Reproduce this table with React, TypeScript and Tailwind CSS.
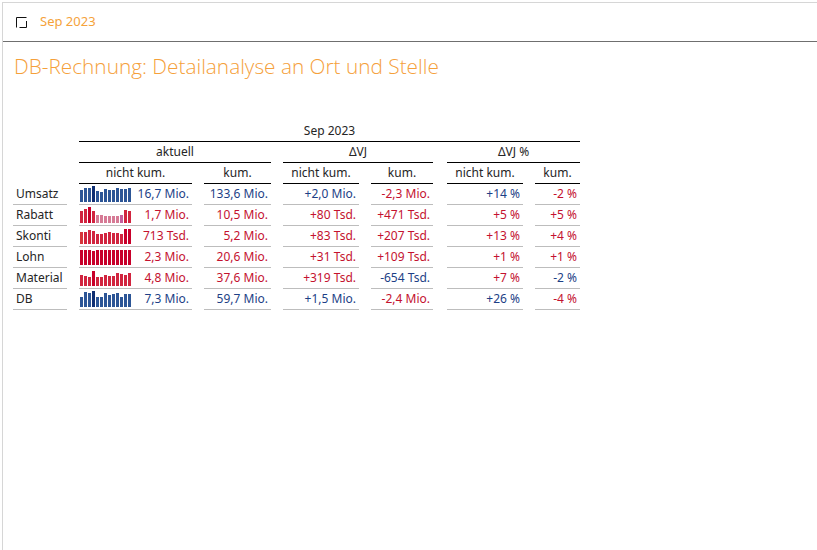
import React from "react";

const BLUE = "#1d3f86";
const RED = "#c4122f";

type Row = {
  label: string;
  bars: number[];
  colors: string[];
  values: [string, boolean][];
};

const b = "#2c5596";
const bd = "#0f2e72";
const r = "#d1243f";
const rd = "#c8002a";
const pk = "#d67a95";
const pu = "#c55e9c";

const rows: Row[] = [
  {
    label: "Umsatz",
    bars: [12, 14, 14, 16, 11, 10, 13, 12, 12, 14, 13, 13, 14],
    colors: [b, b, b, bd, b, b, b, b, b, b, b, b, b],
    values: [["16,7 Mio.", true], ["133,6 Mio.", true], ["+2,0 Mio.", true], ["-2,3 Mio.", false], ["+14 %", true], ["-2 %", false]],
  },
  {
    label: "Rabatt",
    bars: [12, 14, 16, 12, 8, 8, 7, 7, 7, 7, 8, 13, 12],
    colors: [r, r, rd, r, pk, pk, pk, pk, pk, pk, pu, r, r],
    values: [["1,7 Mio.", false], ["10,5 Mio.", false], ["+80 Tsd.", false], ["+471 Tsd.", false], ["+5 %", false], ["+5 %", false]],
  },
  {
    label: "Skonti",
    bars: [12, 12, 14, 13, 10, 10, 11, 12, 11, 11, 10, 15, 15],
    colors: ["#d6353a", r, r, r, r, r, r, r, r, r, r, rd, rd],
    values: [["713 Tsd.", false], ["5,2 Mio.", false], ["+83 Tsd.", false], ["+207 Tsd.", false], ["+13 %", false], ["+4 %", false]],
  },
  {
    label: "Lohn",
    bars: [15, 15, 15, 14, 15, 15, 15, 15, 15, 15, 15, 15, 15],
    colors: [rd, rd, rd, rd, rd, rd, rd, rd, rd, rd, rd, rd, rd],
    values: [["2,3 Mio.", false], ["20,6 Mio.", false], ["+31 Tsd.", false], ["+109 Tsd.", false], ["+1 %", false], ["+1 %", false]],
  },
  {
    label: "Material",
    bars: [11, 10, 9, 15, 9, 9, 11, 10, 10, 13, 12, 11, 13],
    colors: [r, r, r, rd, r, r, r, r, r, r, r, r, r],
    values: [["4,8 Mio.", false], ["37,6 Mio.", false], ["+319 Tsd.", false], ["-654 Tsd.", true], ["+7 %", false], ["-2 %", true]],
  },
  {
    label: "DB",
    bars: [10, 15, 14, 16, 10, 10, 14, 12, 13, 14, 10, 13, 13],
    colors: [b, b, b, bd, b, b, b, b, b, b, b, b, b],
    values: [["7,3 Mio.", true], ["59,7 Mio.", true], ["+1,5 Mio.", true], ["-2,4 Mio.", false], ["+26 %", true], ["-4 %", false]],
  },
];

const Spark = ({ bars, colors }: { bars: number[]; colors: string[] }) => (
  <div className="flex h-[16px] items-end gap-[1px]">
    {bars.map((h, i) => (
      <div key={i} className="w-[3px]" style={{ height: h, backgroundColor: colors[i] }} />
    ))}
  </div>
);

export default function App() {
  return (
    <div className="relative h-[550px] w-[817px] overflow-hidden bg-white font-['Noto_Sans',sans-serif] text-[#252525]">
      <div className="ml-[2px] mt-[2px] h-full border-l border-t border-[#d6d6d6]">
        {/* top bar */}
        <div className="flex h-[39px] items-center gap-[13px] border-b border-[#6f6f6f] pl-[13px]">
          <svg width="11" height="11" viewBox="0 0 11 11" fill="none" stroke="#111" strokeWidth="1">
            <path d="M0.5 10.5V0.5H10.5" />
            <path d="M3.5 10.5H10.5V4" />
          </svg>
          <span className="text-[13px] text-[#f5a23a]">Sep 2023</span>
        </div>

        <h1 className="ml-[11px] mt-[10px] h-[28px] font-['Open_Sans',sans-serif] text-[20.8px] font-light leading-[28px] text-[#f5a03a]">
          DB-Rechnung: Detailanalyse an Ort und Stelle
        </h1>

        {/* table */}
        <div className="ml-[10px] mt-[41px] grid grid-cols-[54px_113px_67px_76px_64px_76px_45px] gap-x-[12px] text-[12px] leading-none">
          <div />
          <div className="col-span-6 flex h-[21px] items-center justify-center border-b border-black">Sep 2023</div>

          <div />
          <div className="col-span-2 flex h-[21px] items-center justify-center border-b border-black">aktuell</div>
          <div className="col-span-2 mr-[2px] flex h-[21px] items-center justify-center border-b border-black">ΔVJ</div>
          <div className="col-span-2 flex h-[21px] items-center justify-center border-b border-black">ΔVJ %</div>

          <div />
          {["nicht kum.", "kum.", "nicht kum.", "kum.", "nicht kum.", "kum."].map((t, i) => (
            <div
              key={i}
              className={`flex h-[21px] items-center justify-center border-b border-black ${i === 3 ? "w-[62px]" : ""}`}
            >
              {t}
            </div>
          ))}

          {rows.map((row) => (
            <React.Fragment key={row.label}>
              <div className="flex h-[21px] items-center border-b border-[#bdbdbd] pl-[3px]">{row.label}</div>
              {row.values.map(([v, good], i) => (
                <div
                  key={i}
                  className={`flex h-[21px] items-center border-b border-[#bdbdbd] pr-[3px] ${
                    i === 0 ? "justify-between pl-[1px]" : "justify-end"
                  } ${i === 3 ? "w-[62px]" : ""}`}
                >
                  {i === 0 && <Spark bars={row.bars} colors={row.colors} />}
                  <span style={{ color: good ? BLUE : RED }}>{v}</span>
                </div>
              ))}
            </React.Fragment>
          ))}
        </div>
      </div>
    </div>
  );
}
